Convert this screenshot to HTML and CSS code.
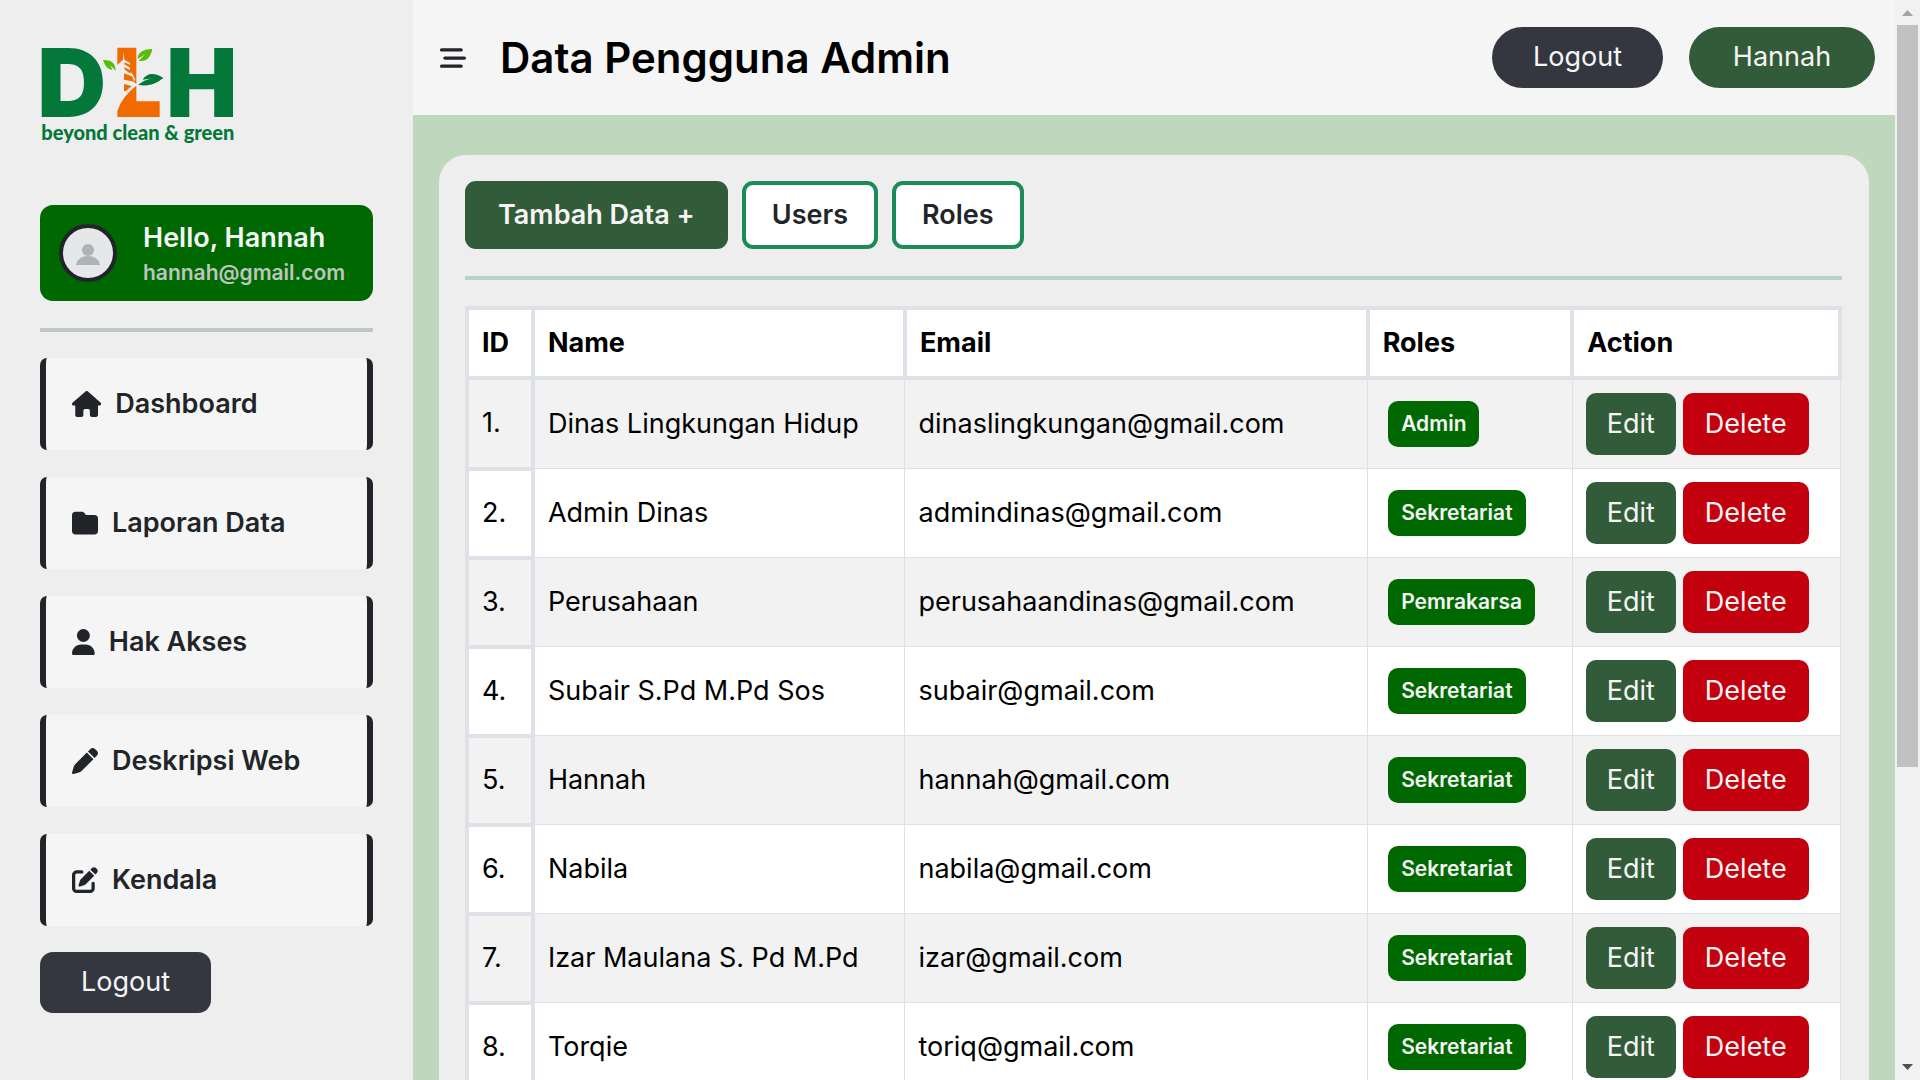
FILE: index.html
```html
<!DOCTYPE html>
<html lang="id">
<head>
<meta charset="utf-8">
<meta name="viewport" content="width=device-width, initial-scale=1">
<title>Data Pengguna Admin</title>
<link rel="stylesheet" href="styles.css">
</head>
<body>
<div class="app">
  <aside class="sidebar">
    <svg class="logo" viewBox="30 30 600 300" role="img" aria-label="DLH beyond clean &amp; green">
      <g class="logo-green">
        <text class="logo-letter" x="22" y="246">D</text>
        <text class="logo-letter" x="408" y="246">H</text>
        <text class="logo-tagline" x="34" y="315">beyond clean &amp; green</text>
      </g>
      <path class="logo-orange" d="M262 38H319V146L311 141L316 134L308 118L300 110V84L283 74L281 50L279 74L262 90Z"/>
      <path class="logo-orange" d="M319 152V199H389V246H262V228Q276 184 319 152Z"/>
      <path class="logo-orange" d="M282 115L306 124L314 140L282 134ZM282 147L305 153L288 168H282Z"/>
      <path class="logo-orange" d="M283 82L301 90V98L283 88ZM283 97L301 106V116L283 103Z"/>
      <path class="logo-leaf" d="M219 75C240 74 257 82 257 107L240 90L248 105C231 102 225 92 219 75Z"/>
      <path class="logo-leaf" d="M367 42C362 68 348 82 326 77L346 58L323 72C323 52 340 42 367 42Z"/>
      <path class="logo-green" d="M325 150C338 138 350 134 368 130L338 134C350 112 376 112 400 129C382 142 364 156 325 150Z"/>
    </svg>

    <section class="profile">
      <svg class="avatar" viewBox="0 0 50 50" aria-hidden="true">
        <circle class="avatar-figure" cx="25" cy="22" r="6"/>
        <path class="avatar-figure" d="M13 37C14 31 19 28 25 28S36 31 37 37Z"/>
      </svg>
      <div class="profile-text">
        <p class="profile-name">Hello, Hannah</p>
        <p class="profile-email">hannah@gmail.com</p>
      </div>
    </section>

    <hr class="rule">

    <nav class="menu">
      <a class="menu-item" href="#"><svg class="icon" viewBox="0 0 576 512" aria-hidden="true"><path d="M575.8 255.5c0 18-15 32.1-32 32.1h-32l.7 160.2c0 2.7-.2 5.4-.5 8.1V472c0 22.1-17.9 40-40 40H456c-1.1 0-2.2 0-3.3-.1c-1.4 .1-2.8 .1-4.2 .1H416 392c-22.1 0-40-17.9-40-40V448 384c0-17.7-14.3-32-32-32H256c-17.7 0-32 14.3-32 32v64 24c0 22.1-17.9 40-40 40H160 128.1c-1.5 0-3-.1-4.5-.2c-1.2 .1-2.4 .2-3.6 .2H104c-22.1 0-40-17.9-40-40V360c0-.9 0-1.9 .1-2.8V287.6H32c-18 0-32-14-32-32.1c0-9 3-17 10-24L266.4 8c7-7 15-8 22-8s15 2 21 7L564.8 231.5c8 7 12 15 11 24z"/></svg>Dashboard</a>
      <a class="menu-item" href="#"><svg class="icon" viewBox="0 0 512 512" aria-hidden="true"><path d="M64 480H448c35.3 0 64-28.7 64-64V160c0-35.3-28.7-64-64-64H288c-10.1 0-19.6-4.7-25.6-12.8L243.2 57.6C231.1 41.5 212.1 32 192 32H64C28.7 32 0 60.7 0 96V416c0 35.3 28.7 64 64 64z"/></svg>Laporan Data</a>
      <a class="menu-item" href="#"><svg class="icon" viewBox="0 0 448 512" aria-hidden="true"><path d="M224 256A128 128 0 1 0 224 0a128 128 0 1 0 0 256zm-45.7 48C79.8 304 0 383.8 0 482.3C0 498.7 13.3 512 29.7 512H418.3c16.4 0 29.7-13.3 29.7-29.7C448 383.8 368.2 304 269.7 304H178.3z"/></svg>Hak Akses</a>
      <a class="menu-item" href="#"><svg class="icon" viewBox="0 0 512 512" aria-hidden="true"><path d="M362.7 19.3L314.3 67.7 444.3 197.7l48.4-48.4c25-25 25-65.5 0-90.5L453.3 19.3c-25-25-65.5-25-90.5 0zm-71 71L58.6 323.5c-10.4 10.4-18 23.3-22.2 37.4L1 481.2C-1.5 489.7 .8 498.8 7 505s15.3 8.5 23.7 6.1l120.3-35.4c14.1-4.2 27-11.8 37.4-22.2L421.7 220.3 291.7 90.3z"/></svg>Deskripsi Web</a>
      <a class="menu-item" href="#"><svg class="icon" viewBox="0 0 512 512" aria-hidden="true"><path d="M471.6 21.7c-21.9-21.9-57.3-21.9-79.2 0L362.3 51.7l97.9 97.9 30.1-30.1c21.9-21.9 21.9-57.3 0-79.2L471.6 21.7zm-299.2 220c-6.1 6.1-10.8 13.6-13.5 21.9l-29.6 88.8c-2.9 8.6-.6 18.1 5.8 24.6s15.9 8.7 24.6 5.8l88.8-29.6c8.2-2.7 15.7-7.4 21.9-13.5L437.7 172.3 339.7 74.3 172.4 241.7zM96 64C43 64 0 107 0 160V416c0 53 43 96 96 96H352c53 0 96-43 96-96V320c0-17.7-14.3-32-32-32s-32 14.3-32 32v96c0 17.7-14.3 32-32 32H96c-17.7 0-32-14.3-32-32V160c0-17.7 14.3-32 32-32h96c17.7 0 32-14.3 32-32s-14.3-32-32-32H96z"/></svg>Kendala</a>
    </nav>

    <button class="button button-dark" type="button">Logout</button>
  </aside>

  <main class="main">
    <header class="topbar">
      <button class="toggle" type="button" aria-label="Menu"><svg class="icon" viewBox="0 0 512 512" aria-hidden="true"><path d="M0 96C0 78.3 14.3 64 32 64H416c17.7 0 32 14.3 32 32s-14.3 32-32 32H32C14.3 128 0 113.7 0 96zM64 256c0-17.7 14.3-32 32-32H480c17.7 0 32 14.3 32 32s-14.3 32-32 32H96c-17.7 0-32-14.3-32-32zM448 416c0 17.7-14.3 32-32 32H32c-17.7 0-32-14.3-32-32s14.3-32 32-32H416c17.7 0 32 14.3 32 32z"/></svg></button>
      <h1 class="title">Data Pengguna Admin</h1>
      <div class="topbar-actions">
        <button class="button button-dark button-pill" type="button">Logout</button>
        <button class="button button-green button-pill" type="button">Hannah</button>
      </div>
    </header>

    <section class="panel">
      <div class="toolbar">
        <button class="tool tool-primary" type="button">Tambah Data +</button>
        <button class="tool" type="button">Users</button>
        <button class="tool" type="button">Roles</button>
      </div>
      <hr class="rule rule-green">
      <table class="users">
        <colgroup><col class="col-id"><col class="col-name"><col class="col-email"><col class="col-roles"><col></colgroup>
        <thead>
          <tr><th scope="col">ID</th><th scope="col">Name</th><th scope="col">Email</th><th scope="col">Roles</th><th scope="col">Action</th></tr>
        </thead>
        <tbody>
          <tr><th scope="row">1.</th><td>Dinas Lingkungan Hidup</td><td>dinaslingkungan@gmail.com</td><td><span class="badge">Admin</span></td><td><div class="actions"><button class="action action-edit" type="button">Edit</button><button class="action action-delete" type="button">Delete</button></div></td></tr>
          <tr><th scope="row">2.</th><td>Admin Dinas</td><td>admindinas@gmail.com</td><td><span class="badge">Sekretariat</span></td><td><div class="actions"><button class="action action-edit" type="button">Edit</button><button class="action action-delete" type="button">Delete</button></div></td></tr>
          <tr><th scope="row">3.</th><td>Perusahaan</td><td>perusahaandinas@gmail.com</td><td><span class="badge">Pemrakarsa</span></td><td><div class="actions"><button class="action action-edit" type="button">Edit</button><button class="action action-delete" type="button">Delete</button></div></td></tr>
          <tr><th scope="row">4.</th><td>Subair S.Pd M.Pd Sos</td><td>subair@gmail.com</td><td><span class="badge">Sekretariat</span></td><td><div class="actions"><button class="action action-edit" type="button">Edit</button><button class="action action-delete" type="button">Delete</button></div></td></tr>
          <tr><th scope="row">5.</th><td>Hannah</td><td>hannah@gmail.com</td><td><span class="badge">Sekretariat</span></td><td><div class="actions"><button class="action action-edit" type="button">Edit</button><button class="action action-delete" type="button">Delete</button></div></td></tr>
          <tr><th scope="row">6.</th><td>Nabila</td><td>nabila@gmail.com</td><td><span class="badge">Sekretariat</span></td><td><div class="actions"><button class="action action-edit" type="button">Edit</button><button class="action action-delete" type="button">Delete</button></div></td></tr>
          <tr><th scope="row">7.</th><td>Izar Maulana S. Pd M.Pd</td><td>izar@gmail.com</td><td><span class="badge">Sekretariat</span></td><td><div class="actions"><button class="action action-edit" type="button">Edit</button><button class="action action-delete" type="button">Delete</button></div></td></tr>
          <tr><th scope="row">8.</th><td>Torqie</td><td>toriq@gmail.com</td><td><span class="badge">Sekretariat</span></td><td><div class="actions"><button class="action action-edit" type="button">Edit</button><button class="action action-delete" type="button">Delete</button></div></td></tr>
        </tbody>
      </table>
    </section>
  </main>

  <div class="scrollbar" aria-hidden="true">
    <svg class="arrow arrow-up" viewBox="0 0 11 6"><path d="M0 6L5.5 0L11 6Z"/></svg>
    <div class="track"><div class="thumb"></div></div>
    <svg class="arrow" viewBox="0 0 11 6"><path d="M0 0L5.5 6L11 0Z"/></svg>
  </div>
</div>
</body>
</html>
```
FILE: styles.css
```css
* {
  box-sizing: border-box;
  margin: 0;
}

body {
  font-family: Inter, sans-serif;
  font-size: 27px;
  line-height: 40px;
  color: #212529;
}

button {
  border: 0;
  font: inherit;
  cursor: pointer;
}

.app {
  display: grid;
  grid-template-columns: 413px minmax(0, 1fr) 25px;
  height: 100vh;
  overflow: hidden;
}

/* Sidebar */
.sidebar {
  display: flex;
  flex-direction: column;
  align-items: flex-start;
  padding: 45px 40px 27px;
  background: #eeeeee;
}

.logo {
  width: 200px;
  height: 100px;
  margin-bottom: 60px;
  overflow: visible;
}

.logo-green { fill: #04783a; }
.logo-orange { fill: #f06a00; }
.logo-leaf { fill: #57bd0b; }

.logo-letter {
  font: 900 286px Inter, sans-serif;
}

.logo-tagline {
  font: 900 60px Lato, sans-serif;
}

.profile {
  display: flex;
  align-items: center;
  gap: 26px;
  width: 100%;
  padding: 13px 19px;
  border-radius: 13px;
  background: #006800;
}

.avatar {
  flex: none;
  width: 58px;
  height: 58px;
  border: 4px solid #212529;
  border-radius: 50%;
  background: #e5e7e9;
}

.avatar-figure { fill: #adb3b7; }

.profile-text {
  font-weight: 600;
  white-space: nowrap;
}

.profile-name { color: #f5f5f5; }

.profile-email {
  font-size: 21px;
  line-height: 30px;
  color: #bdc6be;
}

.rule {
  width: 100%;
  height: 4px;
  margin: 27px 0 26px;
  border: 0;
  background: #bdc9be;
}

.rule-green { background: #b6d3c4; }

.menu {
  display: flex;
  flex-direction: column;
  gap: 27px;
  width: 100%;
  margin-bottom: 26px;
}

.menu-item {
  display: flex;
  align-items: center;
  gap: 14px;
  padding: 26px;
  border: solid #212529;
  border-width: 0 6px;
  border-radius: 7px;
  background: #f5f5f5;
  color: #212529;
  font-weight: 600;
  text-decoration: none;
}

.icon {
  display: block;
  height: 26px;
  fill: #212529;
}

.button {
  padding: 10px 41px 11px;
  border-radius: 13px;
  color: #f5f5f5;
}

.button-dark { background: #343640; }

.button-green {
  min-width: 186px;
  background: #325b39;
}

.button-pill { border-radius: 31px; }

/* Main column */
.main {
  overflow-y: auto;
  scrollbar-width: none;
  background: #bfd8bd;
}

.topbar {
  display: flex;
  align-items: center;
  padding: 27px 20px 27px 27px;
  background: #f5f5f5;
}

.toggle {
  padding: 0;
  background: none;
}

.title {
  margin-left: 34px;
  font-size: 42px;
  font-weight: 600;
  color: #000000;
}

.topbar-actions {
  display: flex;
  gap: 26px;
  margin-left: auto;
}

.panel {
  margin: 40px 26px;
  padding: 26px 27px 26px 26px;
  border-radius: 27px;
  background: #eeeeee;
}

.toolbar {
  display: flex;
  gap: 14px;
}

.tool {
  padding: 10px 26px;
  border: 4px solid #1c8b56;
  border-radius: 11px;
  background: #ffffff;
  color: #212529;
  font-weight: 600;
}

.tool-primary {
  padding: 14px 33px;
  border: 0;
  background: #325b39;
  color: #f5f5f5;
}

/* User table */
.users {
  width: 100%;
  table-layout: fixed;
  border-collapse: collapse;
  color: #000000;
}

.col-id { width: 4.8%; }
.col-name { width: 27.1%; }
.col-email { width: 33.7%; }
.col-roles { width: 14.9%; }

.users th,
.users td {
  padding: 13px;
  border: 1px solid #dee2e6;
  background: #ffffff;
  text-align: left;
}

.users th {
  border-width: 4px;
}

.users thead th {
  height: 70px;
  font-weight: 700;
}

.users tbody th {
  font-weight: 400;
}

.users tbody tr:nth-child(odd) > * {
  background: #f2f2f2;
}

.badge {
  display: inline-block;
  margin-left: 7px;
  padding: 8px 13px;
  border-radius: 10px;
  background: #006800;
  color: #f5f5f5;
  font-size: 21px;
  font-weight: 600;
  line-height: 30px;
  vertical-align: middle;
}

.actions {
  display: flex;
  gap: 7px;
}

.action {
  padding: 11px 21px;
  border-radius: 10px;
  color: #f5f5f5;
}

.action-edit { background: #325b39; }

.action-delete {
  padding: 11px 22px;
  background: #c3000d;
}

/* Scroll bar */
.scrollbar {
  display: flex;
  flex-direction: column;
  align-items: center;
  padding: 10px 2px;
  background: #f1f1f1;
}

.arrow {
  flex: none;
  width: 11px;
  height: 6px;
  fill: #505050;
}

.arrow-up { fill: #a3a3a3; }

.track {
  flex: 1;
  width: 100%;
  padding: 9px 0;
}

.thumb {
  height: 72%;
  background: #c1c1c1;
}
```
